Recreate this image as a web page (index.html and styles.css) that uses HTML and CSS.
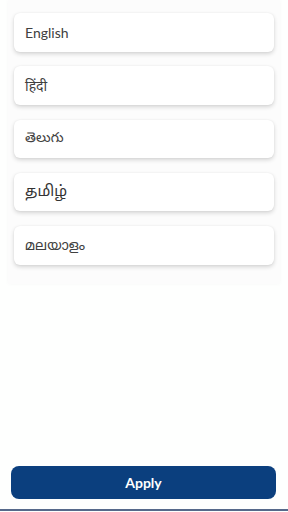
FILE: index.html
```html
<!DOCTYPE html>
<html lang="en">
<head>
<meta charset="utf-8">
<link rel="stylesheet" href="styles.css">
</head>
<body>
<div class="page">
  <div class="panel">
    <div class="card">English</div>
    <div class="card">हिंदी</div>
    <div class="card">తెలుగు</div>
    <div class="card card-ta">தமிழ்</div>
    <div class="card">മലയാളം</div>
  </div>
  <div class="footer">
    <button class="apply">Apply</button>
  </div>
  <div class="bottom-line"></div>
</div>
</body>
</html>
```
FILE: styles.css
```css
html, body {
  margin: 0;
  padding: 0;
  background: #fefffe;
}
.page {
  width: 288px;
  height: 512px;
  display: flex;
  flex-direction: column;
  font-family: Lato, "Noto Sans", "Noto Sans Devanagari", "Noto Sans Telugu", "Noto Sans Tamil", "Noto Sans Malayalam", sans-serif;
}
.panel {
  margin: 0 8px;
  padding: 13px 6px 19px;
  background: #fcfcfc;
  box-shadow: 0 0 4px rgba(0,0,0,0.03);
  display: flex;
  flex-direction: column;
  gap: 14.75px;
}
.card {
  height: 38.5px;
  background: #ffffff;
  border-radius: 6px;
  box-shadow: 0 2px 4px rgba(0,0,0,0.16), 0 0 2px rgba(0,0,0,0.06);
  display: flex;
  align-items: center;
  padding-left: 11px;
  font-size: 14px;
  color: #404040;
}
.card-ta {
  font-family: "Noto Sans Tamil", "Lohit Tamil", "Noto Sans", sans-serif;
  font-size: 15px;
  color: #333333;
}
.footer {
  margin-top: auto;
  padding: 0 12px 10px 11px;
}
.apply {
  width: 100%;
  height: 33px;
  border: none;
  border-radius: 8px;
  background: #0b3f7e;
  color: #ffffff;
  font-family: Lato, "Noto Sans", sans-serif;
  font-weight: 700;
  font-size: 14px;
  display: block;
}
.bottom-line {
  height: 2px;
  background: #56698a;
  margin-bottom: 1px;
}
```
